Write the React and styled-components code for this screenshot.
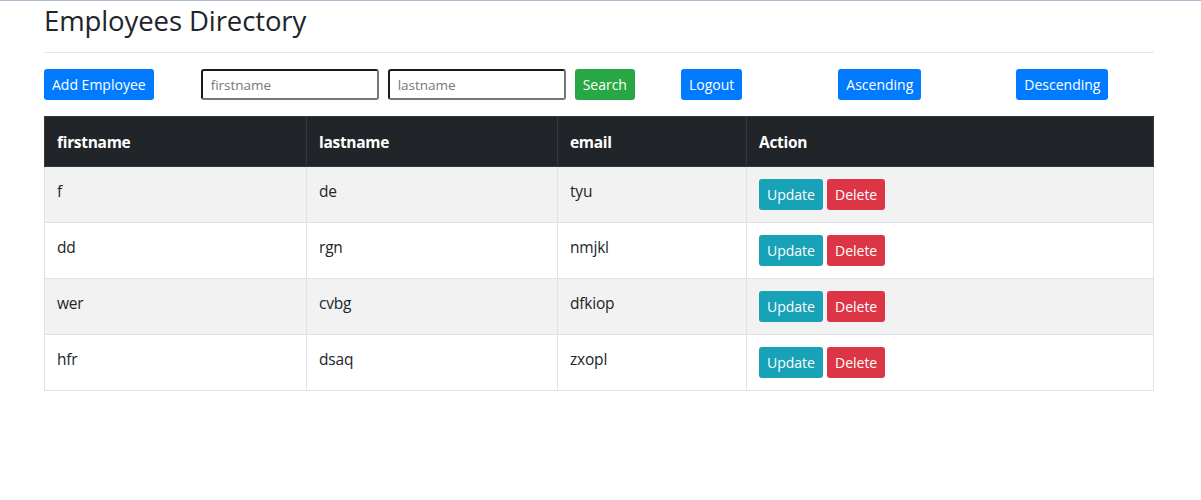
import React from 'react'
import styled, { createGlobalStyle } from 'styled-components'

const GlobalStyle = createGlobalStyle`
  * {
    box-sizing: border-box;
  }
  body {
    margin: 0;
    font-family: 'Open Sans', 'Noto Sans', sans-serif;
    color: #212529;
    background: #fff;
    border-top: 1px solid #aebbd3;
  }
`

const Container = styled.div`
  width: 1110px;
  margin: 0 0 0 44px;
`

const Title = styled.h2`
  margin: 0;
  padding-top: 5px;
  font-size: 27.5px;
  font-weight: 500;
  line-height: 30px;
  color: #212529;
  letter-spacing: -0.1px;
`

const Rule = styled.hr`
  margin: 16px 0 16px;
  border: 0;
  border-top: 1px solid #e4e6e9;
`

const Toolbar = styled.div`
  display: flex;
  align-items: center;
  margin-bottom: 16px;
`

const Slot = styled.div`
  display: flex;
  align-items: center;
  gap: 9px;
  margin-left: ${p => p.$offset || 0}px;
`

const colors = {
  primary: '#007bff',
  success: '#28a745',
  info: '#17a2b8',
  danger: '#dc3545'
}

const Button = styled.button`
  height: 31px;
  padding: 0 8px;
  border: 0;
  border-radius: 3px;
  background: ${p => colors[p.$variant || 'primary']};
  color: #fff;
  font-family: inherit;
  font-size: 14px;
  line-height: 31px;
  cursor: pointer;
`

const Field = styled.input`
  width: 178px;
  height: 31px;
  padding: 0 8px;
  border: 2px solid;
  border-color: #1b1b1b #767676 #767676 #1b1b1b;
  border-radius: 3px;
  font-family: inherit;
  font-size: 13.5px;
  color: #212529;
  &::placeholder {
    color: #777;
  }
`

const Table = styled.table`
  width: 1110px;
  border-collapse: collapse;
  table-layout: fixed;
`

const Head = styled.th`
  height: 50px;
  background: #212529;
  color: #fff;
  text-align: left;
  font-size: 15.5px;
  font-weight: 700;
  line-height: 24px;
  padding: 12px 12px;
  border: 1px solid #32383e;
  letter-spacing: -0.3px;
`

const Row = styled.tr`
  background: ${p => (p.$striped ? '#f2f2f2' : '#fff')};
`

const Cell = styled.td`
  vertical-align: top;
  padding: 12px;
  font-size: 15.5px;
  line-height: 24px;
  height: 56px;
  border: 1px solid #dee2e6;
  letter-spacing: -0.2px;
`

const Actions = styled.div`
  display: flex;
  gap: 4px;
`

const employees = [
  { first: 'f', last: 'de', email: 'tyu' },
  { first: 'dd', last: 'rgn', email: 'nmjkl' },
  { first: 'wer', last: 'cvbg', email: 'dfkiop' },
  { first: 'hfr', last: 'dsaq', email: 'zxopl' }
]

const App = () => {
  return (
    <>
      <GlobalStyle />
      <Container>
        <Title>Employees Directory</Title>
        <Rule />
        <Toolbar>
          <Slot>
            <Button>Add Employee</Button>
          </Slot>
          <Slot $offset={47}>
            <Field placeholder='firstname' />
            <Field placeholder='lastname' />
            <Button $variant='success'>Search</Button>
          </Slot>
          <Slot $offset={46}>
            <Button>Logout</Button>
          </Slot>
          <Slot $offset={96}>
            <Button>Ascending</Button>
          </Slot>
          <Slot $offset={95}>
            <Button>Descending</Button>
          </Slot>
        </Toolbar>
        <Table>
          <colgroup>
            <col style={{ width: 262 }} />
            <col style={{ width: 251 }} />
            <col style={{ width: 189 }} />
            <col />
          </colgroup>
          <thead>
            <tr>
              <Head>firstname</Head>
              <Head>lastname</Head>
              <Head>email</Head>
              <Head>Action</Head>
            </tr>
          </thead>
          <tbody>
            {employees.map((emp, i) => (
              <Row key={emp.first} $striped={i % 2 === 0}>
                <Cell>{emp.first}</Cell>
                <Cell>{emp.last}</Cell>
                <Cell>{emp.email}</Cell>
                <Cell>
                  <Actions>
                    <Button $variant='info'>Update</Button>
                    <Button $variant='danger'>Delete</Button>
                  </Actions>
                </Cell>
              </Row>
            ))}
          </tbody>
        </Table>
      </Container>
    </>
  )
}

export default App
